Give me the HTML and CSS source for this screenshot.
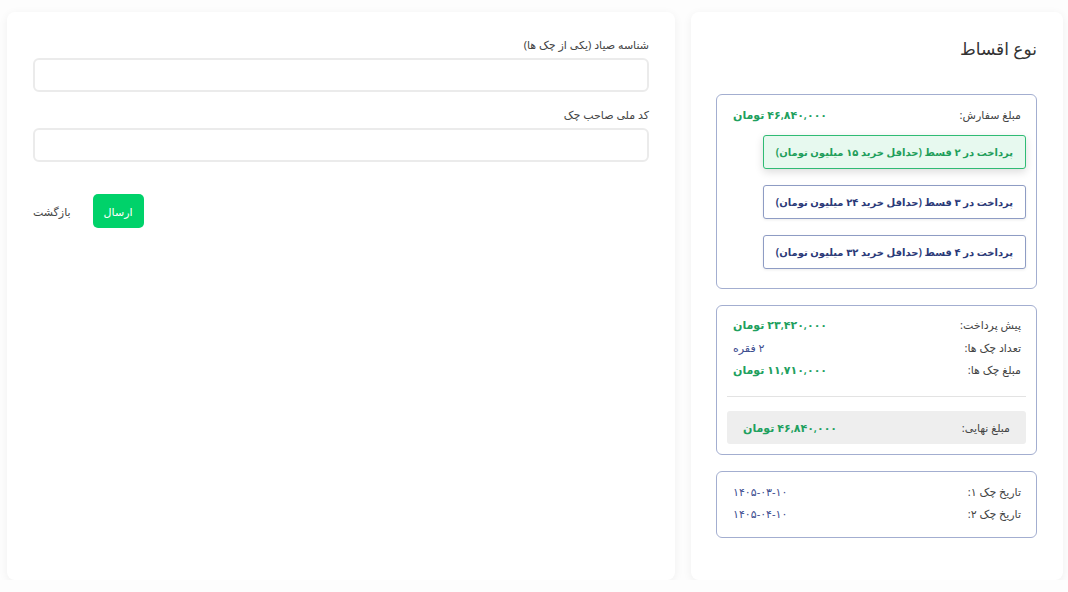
FILE: index.html
```html
<!DOCTYPE html>
<html lang="fa" dir="rtl">

<head>
    <meta charset="UTF-8">
    <meta name="viewport" content="width=device-width, initial-scale=1.0">
    <title>نوع اقساط</title>
    <link rel="stylesheet" href="styles.css">
</head>

<body>
    <main class="page">
        <!-- ستون راست: انتخاب نوع اقساط -->
        <section class="card side">
            <h2 class="title">نوع اقساط</h2>

            <div class="box">
                <div class="row">
                    <span>مبلغ سفارش:</span>
                    <span class="green">۴۶,۸۴۰,۰۰۰ تومان</span>
                </div>
                <div class="plans">
                    <button class="plan active">پرداخت در ۲ قسط (حداقل خرید ۱۵ میلیون تومان)</button>
                    <button class="plan">پرداخت در ۳ قسط (حداقل خرید ۲۴ میلیون تومان)</button>
                    <button class="plan">پرداخت در ۴ قسط (حداقل خرید ۳۲ میلیون تومان)</button>
                </div>
            </div>

            <div class="box">
                <div class="row">
                    <span>پیش پرداخت:</span>
                    <span class="green">۲۳,۴۲۰,۰۰۰ تومان</span>
                </div>
                <div class="row">
                    <span>تعداد چک ها:</span>
                    <span class="blue">۲ فقره</span>
                </div>
                <div class="row">
                    <span>مبلغ چک ها:</span>
                    <span class="green">۱۱,۷۱۰,۰۰۰ تومان</span>
                </div>
                <hr class="divider">
                <div class="row total">
                    <span>مبلغ نهایی:</span>
                    <span class="green">۴۶,۸۴۰,۰۰۰ تومان</span>
                </div>
            </div>

            <div class="box dates">
                <div class="row">
                    <span>تاریخ چک ۱:</span>
                    <span class="blue">۱۴۰۵-۰۳-۱۰</span>
                </div>
                <div class="row">
                    <span>تاریخ چک ۲:</span>
                    <span class="blue">۱۴۰۵-۰۴-۱۰</span>
                </div>
            </div>
        </section>

        <!-- ستون چپ: فرم اطلاعات چک -->
        <section class="card main">
            <label class="field">
                <span class="label">شناسه صیاد (یکی از چک ها)</span>
                <input class="input" type="text">
            </label>
            <label class="field">
                <span class="label">کد ملی صاحب چک</span>
                <input class="input" type="text">
            </label>
            <div class="actions">
                <button class="submit">ارسال</button>
                <button class="back">بازگشت</button>
            </div>
        </section>
    </main>
</body>

</html>
```

FILE: styles.css
```css
body {
    margin: 0px;
    background: #fdfdfd;
    font-family: "Noto Sans", "DejaVu Sans", sans-serif;
    color: #444;
    font-size: 11px;
}

.page {
    display: flex;
    gap: 16px;
    padding: 12px 5px 0px 7px;
    height: 568px;
}

.card {
    background: #fff;
    border-radius: 8px;
    box-shadow: 0 2px 10px rgba(0, 0, 0, 0.06);
    box-sizing: border-box;
}

.side {
    width: 372px;
    padding: 25px 26px 0px 25px;
    display: flex;
    flex-direction: column;
    gap: 16px;
}

.main {
    flex: 1;
    padding: 24px 26px;
}

.title {
    margin: 0px 0px 17px 0px;
    font-size: 17px;
    font-weight: normal;
    color: #333;
    line-height: 24px;
}

.box {
    border: 1px solid #a3aed0;
    border-radius: 6px;
    padding: 8px 10px 10px 10px;
}

.box.dates {
    padding-bottom: 12px;
}

.row {
    display: flex;
    justify-content: space-between;
    align-items: center;
    padding: 0px 5px 0px 6px;
    height: 22.5px;
}

.green {
    color: #21a05e;
    font-weight: 600;
}

.blue {
    color: #3d4d8f;
}

.plans {
    display: flex;
    flex-direction: column;
    align-items: flex-start;
    gap: 16px;
    padding: 9px 0px 9px 0px;
}

.plan {
    font-family: inherit;
    font-size: 10px;
    font-weight: bold;
    color: #2b3a78;
    background: #fff;
    border: 1px solid #8e9cc4;
    border-radius: 3px;
    height: 34px;
    padding: 0px 12px;
    box-shadow: 0 1px 3px rgba(0, 0, 0, 0.08);
}

.plan.active {
    color: #1f9e5b;
    background: #e7f9ef;
    border-color: #2fbb74;
    box-shadow: 0 3px 8px rgba(0, 0, 0, 0.14);
}

.divider {
    border: none;
    border-top: 1px solid #e3e3e3;
    margin: 15px 0px 14px 0px;
}

.row.total {
    background: #eeeeee;
    border-radius: 3px;
    height: 33px;
    padding: 0px 16px 0px 16px;
}

.field {
    display: block;
    margin-bottom: 14px;
}

.label {
    display: block;
    line-height: 18px;
    margin-bottom: 4px;
    color: #444;
}

.input {
    display: block;
    width: 100%;
    height: 34px;
    box-sizing: border-box;
    border: 2px solid #ebebeb;
    border-radius: 6px;
    background: #fff;
    outline: none;
}

.actions {
    display: flex;
    justify-content: flex-end;
    align-items: center;
    gap: 22px;
    margin-top: 32px;
}

.submit {
    font-family: inherit;
    font-size: 11px;
    color: #fff;
    background: #00d26a;
    border: none;
    border-radius: 5px;
    width: 51px;
    height: 34px;
}

.back {
    font-family: inherit;
    font-size: 11px;
    color: #444;
    background: none;
    border: none;
    padding: 0px;
}
```
